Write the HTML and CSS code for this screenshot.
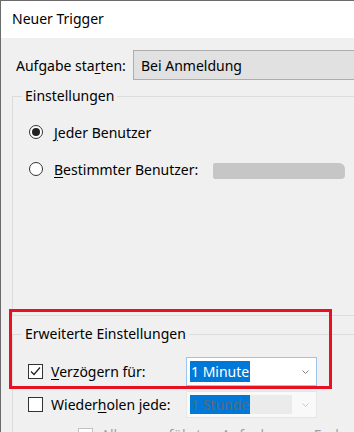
FILE: index.html
```html
<!DOCTYPE html>
<html lang="de">
<head>
    <meta charset="UTF-8">
    <meta name="viewport" content="width=device-width, initial-scale=1.0">
    <title>Neuer Trigger</title>
    <link rel="stylesheet" href="styles.css">
</head>
<body>
    <div class="window">
        <div class="titlebar">Neuer Trigger</div>

        <div class="content">
            <div class="task-row">
                <span class="task-label">Aufgabe sta<u>r</u>ten:</span>
                <div class="combo">Bei Anmeldung</div>
            </div>

            <fieldset class="group group-settings">
                <legend>Einstellungen</legend>
                <div class="radio-row first">
                    <span class="radio checked"></span>
                    <span class="radio-label"><u>J</u>eder Benutzer</span>
                </div>
                <div class="radio-row">
                    <span class="radio"></span>
                    <span class="radio-label user-label"><u>B</u>estimmter Benutzer:</span>
                    <span class="redacted"></span>
                </div>
            </fieldset>

            <fieldset class="group group-advanced">
                <legend>Erweiterte Einstellungen</legend>
                <div class="check-row delay">
                    <span class="checkbox">
                        <svg width="13" height="13" viewBox="0 0 13 13"><path d="M2 6.5 L5 9.5 L11 2.5" fill="none" stroke="#222" stroke-width="1.2"/></svg>
                    </span>
                    <span class="check-label"><u>V</u>erzögern für:</span>
                    <div class="dropdown focused">
                        <span class="selected">1 Minute</span>
                        <svg class="chevron" width="7" height="4" viewBox="0 0 7 4"><path d="M0.5 0.5 L3.5 3.5 L6.5 0.5" fill="none" stroke="#808080" stroke-width="1"/></svg>
                    </div>
                </div>
                <div class="check-row repeat">
                    <span class="checkbox"></span>
                    <span class="check-label">Wieder<u>h</u>olen jede:</span>
                    <div class="dropdown disabled">
                        <span class="field"><span class="selected">1 Stunde</span></span>
                        <svg class="chevron" width="7" height="4" viewBox="0 0 7 4"><path d="M0.5 0.5 L3.5 3.5 L6.5 0.5" fill="none" stroke="#c8c8c8" stroke-width="1"/></svg>
                    </div>
                </div>
                <div class="sub-row">
                    <span class="checkbox disabled"></span>
                    <span class="sub-label">Alle ausgeführten Aufgaben am Ende der Wiederholungsdauer beenden</span>
                </div>
            </fieldset>
        </div>

        <!-- annotation frame -->
        <div class="mark"></div>
    </div>
</body>
</html>
```

FILE: styles.css
```css
html, body {
    margin: 0;
    padding: 0;
    overflow: hidden;
}
body {
    background: #f0f0f0;
    font-family: "Noto Sans", "Segoe UI", sans-serif;
    font-size: 14px;
    color: #000;
}
u {
    text-decoration-thickness: 1px;
    text-underline-offset: 2px;
}
.window {
    position: relative;
    width: 470px;
    height: 432px;
    box-sizing: border-box;
    background: #f0f0f0;
    border-top: 1px solid #6b6b6b;
    border-left: 1px solid #6b6b6b;
}
.titlebar {
    height: 37px;
    box-sizing: border-box;
    display: flex;
    align-items: center;
    padding: 0 0 2px 11px;
    background: #fff;
}
.content {
    padding-left: 11px;
}
.task-row {
    display: flex;
    align-items: center;
    height: 30px;
    margin-top: 12px;
}
.task-label {
    width: 121px;
    padding-left: 4px;
    box-sizing: border-box;
}
.combo {
    flex: 1;
    height: 30px;
    box-sizing: border-box;
    display: flex;
    align-items: center;
    padding-left: 7px;
    background: #e1e1e1;
    border: 1px solid #adadad;
}
.group {
    margin: 0;
    padding: 0;
    border: 1px solid #dcdcdc;
    min-width: 0;
}
.group legend {
    margin-left: 9px;
    padding: 0 3px;
    line-height: 20px;
}
.group-settings {
    margin-top: 6px;
    padding-bottom: 136px;
}
.group-advanced {
    margin-top: 8px;
    padding-bottom: 40px;
}
.radio-row {
    display: flex;
    align-items: center;
    height: 20px;
    margin-top: 17px;
    padding-left: 16px;
}
.radio-row.first {
    margin-top: 16px;
}
.radio {
    width: 14px;
    height: 14px;
    box-sizing: border-box;
    border: 1px solid #333;
    border-radius: 50%;
    background: #fff;
    display: flex;
    align-items: center;
    justify-content: center;
}
.radio.checked::after {
    content: '';
    width: 8px;
    height: 8px;
    border-radius: 50%;
    background: #222;
}
.radio-label {
    margin-left: 11px;
}
.user-label {
    width: 159px;
}
.redacted {
    align-self: flex-end;
    width: 132px;
    height: 16px;
    background: #c6c6c6;
    border-radius: 2px 6px 4px 2px;
    filter: blur(0.6px);
}
.check-row {
    display: flex;
    align-items: center;
    padding-left: 15px;
}
.check-row.delay {
    height: 29px;
    margin-top: 13px;
}
.check-row.repeat {
    height: 27px;
    margin-top: 5px;
}
.checkbox {
    width: 15px;
    height: 15px;
    box-sizing: border-box;
    border: 1px solid #333;
    background: #fff;
    display: flex;
    align-items: center;
    justify-content: center;
    flex-shrink: 0;
}
.checkbox.disabled {
    border-color: #c2c2c2;
}
.check-label {
    width: 135px;
    margin-left: 8px;
}
.dropdown {
    width: 131px;
    height: 100%;
    box-sizing: border-box;
    display: flex;
    align-items: center;
    padding: 0 7px 0 3px;
}
.dropdown.focused {
    background: #fff;
    border: 1px solid #9cc3ea;
}
.dropdown.disabled {
    background: #f9f9f9;
    border: 1px solid #e6e6e6;
}
.dropdown .chevron {
    margin-left: auto;
}
.selected {
    background: #0078d7;
    color: #fff;
    padding: 0 1px;
    line-height: 21px;
}
.field {
    width: 102px;
    height: 19px;
    display: flex;
    align-items: center;
    background: #ebebeb;
}
.field .selected {
    color: #5c6a78;
    line-height: 19px;
}
.sub-row {
    display: flex;
    align-items: flex-start;
    margin-top: 10px;
    padding-left: 65px;
}
.sub-label {
    margin-left: 8px;
    margin-top: -3px;
    color: #a0a0a0;
    white-space: nowrap;
}
.mark {
    position: absolute;
    left: 8px;
    top: 308px;
    width: 323px;
    height: 80px;
    box-sizing: border-box;
    border: 3px solid #e81123;
}
```
